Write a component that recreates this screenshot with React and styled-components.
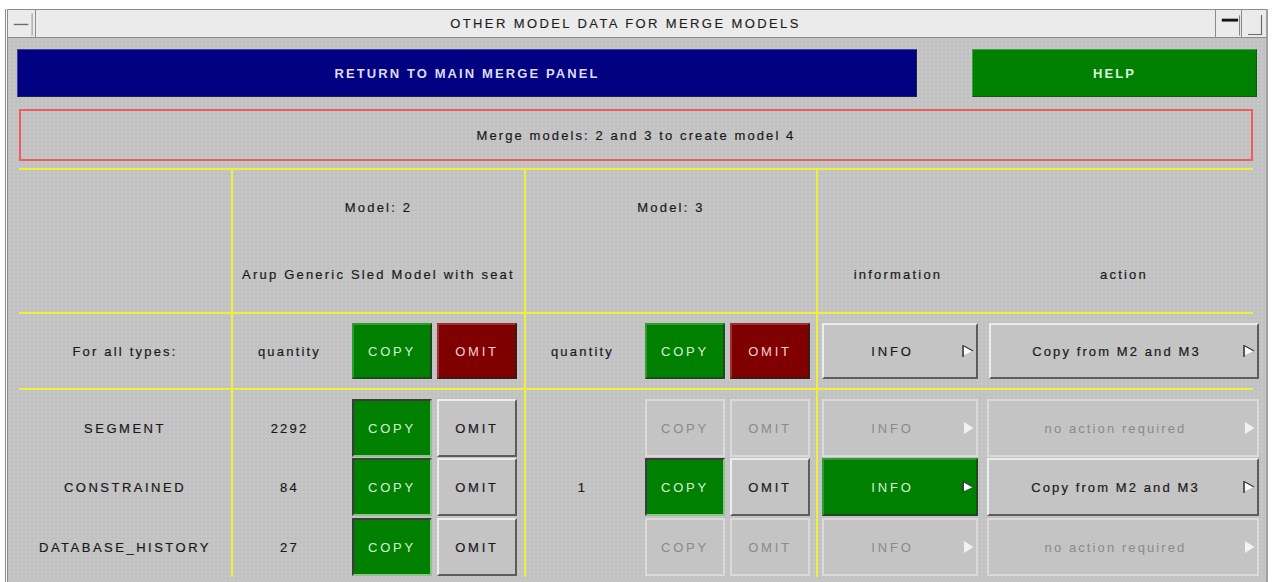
import React from 'react';
import styled, { createGlobalStyle, css } from 'styled-components';

const GlobalStyle = createGlobalStyle`
  html, body {
    margin: 0;
    padding: 0;
    background: #ffffff;
  }
  body {
    font-family: "Liberation Sans", Arial, sans-serif;
  }
  * {
    box-sizing: border-box;
  }
`;

const YELLOW = '#eeee3c';

const Window = styled.div`
  margin: 9px 0 0 5px;
  width: 1263px;
  height: 573px;
  display: flex;
  flex-direction: column;
  border-left: 3px double #8c8c8c;
  border-right: 2px solid #a0a0a0;
`;

const TitleBar = styled.div`
  display: flex;
  height: 29px;
  background: #ebebeb;
  border-top: 1px solid #8c8c8c;
  border-bottom: 1px solid #8c8c8c;
`;

const TitleBox = styled.div`
  width: ${(p) => p.$w}px;
  display: flex;
  align-items: center;
  justify-content: center;
  border-right: 1px solid #8c8c8c;
  &:last-child {
    border-right: none;
  }
`;

const Title = styled.div`
  flex: 1;
  display: flex;
  align-items: center;
  justify-content: center;
  border-right: 1px solid #8c8c8c;
  font-size: 13px;
  letter-spacing: 2.4px;
  color: #1e1e1e;
  -webkit-text-stroke: 0.15px #1e1e1e;
`;

const Body = styled.div`
  flex: 1;
  background-color: #c2c2c2;
  background-image: radial-gradient(circle, rgba(255, 255, 255, 0.16) 0.6px, transparent 0.9px);
  background-size: 4px 4px;
  padding: 11px 9px 0 9px;
  display: flex;
  flex-direction: column;
`;

const TopBar = styled.div`
  display: flex;
  justify-content: space-between;
  height: 48px;
`;

const toneColors = {
  blue: { bg: '#000080', fg: '#dcdcf8', light: '#4040a8', dark: '#202040' },
  help: { bg: '#008000', fg: '#dcf4dc', light: '#40a040', dark: '#205020' },
};

const BigButton = styled.div`
  width: ${(p) => p.$w}px;
  display: flex;
  align-items: center;
  justify-content: center;
  background: ${(p) => toneColors[p.$tone].bg};
  color: ${(p) => toneColors[p.$tone].fg};
  border: 1px solid;
  border-color: ${(p) => `${toneColors[p.$tone].light} ${toneColors[p.$tone].dark} ${toneColors[p.$tone].dark} ${toneColors[p.$tone].light}`};
  font-size: 13px;
  font-weight: bold;
  letter-spacing: 2.1px;
`;

const Message = styled.div`
  margin: 12px 4px 0 2px;
  height: 52px;
  border: 2px solid #ec5e5e;
  display: flex;
  align-items: center;
  justify-content: center;
  font-size: 13px;
  letter-spacing: 2.1px;
  color: #1a1a1a;
  -webkit-text-stroke: 0.2px #1a1a1a;
`;

const Table = styled.div`
  margin: 7px 4px 0 2px;
  border-top: 2px solid ${YELLOW};
`;

const Row = styled.div`
  display: grid;
  grid-template-columns: 212px 293px 292px 446px;
  height: ${(p) => p.$h}px;
  ${(p) =>
    p.$line &&
    css`
      border-top: 2px solid ${YELLOW};
    `}
`;

const Cell = styled.div`
  display: flex;
  align-items: ${(p) => p.$align || 'center'};
  justify-content: ${(p) => p.$justify || 'flex-start'};
  padding-top: ${(p) => p.$pt || 0}px;
  color: #1a1a1a;
  font-size: 13px;
  letter-spacing: ${(p) => (p.$caps ? 2.5 : 2.2)}px;
  -webkit-text-stroke: 0.2px #1a1a1a;
  &:not(:first-child) {
    border-left: 2px solid ${YELLOW};
  }
`;

const ModelHead = styled.div`
  width: 100%;
  display: flex;
  flex-direction: column;
  align-items: center;
  padding-top: 30px;
  gap: 51px;
  line-height: 16px;
  letter-spacing: 2.2px;
`;

const Split = styled.div`
  display: flex;
  align-items: ${(p) => p.$align || 'center'};
  gap: 11px;
  padding-left: 4px;
  height: 100%;
  padding-bottom: ${(p) => p.$pb || 0}px;
`;

const SubLabel = styled.div`
  width: ${(p) => p.$w}px;
  text-align: center;
  padding-right: ${(p) => p.$pr || 0}px;
  line-height: 16px;
`;

const Qty = styled.div`
  width: 113px;
  text-align: center;
`;

const variants = {
  raised: css`
    background: #c4c4c4;
    border-color: #ececec #5c5c5c #5c5c5c #ececec;
    color: #1a1a1a;
    -webkit-text-stroke: 0.2px #1a1a1a;
  `,
  disabled: css`
    background: #c4c4c4;
    border-color: #dadada;
    color: #8a8a8a;
    -webkit-text-stroke: 0;
  `,
  green: css`
    background: #008000;
    border-color: #2f9a2f #1c4a1c #1c4a1c #2f9a2f;
    color: #d4f2d4;
    -webkit-text-stroke: 0;
  `,
  greenIn: css`
    background: #008000;
    border-color: #3c3c3c #8cc48c #8cc48c #3c3c3c;
    color: #d4f2d4;
    -webkit-text-stroke: 0;
  `,
  red: css`
    background: #800000;
    border-color: #a03030 #401818 #401818 #a03030;
    color: #f4d2d2;
    -webkit-text-stroke: 0;
  `,
};

const Btn = styled.div`
  width: ${(p) => p.$w}px;
  height: ${(p) => p.$h}px;
  margin-left: ${(p) => p.$ml || 0}px;
  display: flex;
  align-items: center;
  border: 2px solid;
  font-size: 13px;
  letter-spacing: ${(p) => (p.$caps ? 2.8 : 2.1)}px;
  ${(p) => variants[p.$v]}
`;

const BtnLabel = styled.span`
  flex: 1;
  text-align: center;
`;

const FlagIcon = styled.svg`
  flex: none;
  margin-right: 2px;
`;

const Flag = ({ off }) => (
  <FlagIcon width="13" height="16" viewBox="0 0 13 16">
    {off ? (
      <path d="M3 2 L12.5 8 L3 14 Z" fill="#f2f2f2" />
    ) : (
      <>
        <path d="M2 2v12" stroke="#3c3c3c" strokeWidth="1.6" />
        <path d="M3 3 L12 8 L3 12 Z" fill="#ffffff" />
        <path d="M3 3 L12 8" stroke="#3c3c3c" strokeWidth="1.4" />
      </>
    )}
  </FlagIcon>
);

const MenuIcon = () => (
  <svg width="28" height="27" viewBox="0 0 28 27">
    <path d="M6 14.5h15" stroke="#6a6a6a" strokeWidth="1.4" />
    <path d="M25 3v23" stroke="#8c8c8c" strokeWidth="1" />
  </svg>
);

const MinIcon = () => (
  <svg width="26" height="27" viewBox="0 0 26 27">
    <path d="M6 10h17" stroke="#141414" strokeWidth="3" />
    <path d="M24.5 5v21" stroke="#7a7a7a" strokeWidth="1" />
  </svg>
);

const MaxIcon = () => (
  <svg width="24" height="27" viewBox="0 0 24 27">
    <path d="M19.5 5v19.5H6" stroke="#6a6a6a" strokeWidth="1.2" fill="none" />
  </svg>
);

const modelCols = [
  { head: 'Model: 2', sub: 'Arup Generic Sled Model with seat' },
  { head: 'Model: 3', sub: '' },
];

const rows = [
  {
    name: 'SEGMENT',
    m2: '2292',
    m3: '',
    m3on: false,
    infoOn: false,
    action: 'no action required',
    actionOn: false,
  },
  {
    name: 'CONSTRAINED',
    m2: '84',
    m3: '1',
    m3on: true,
    infoOn: true,
    action: 'Copy from M2 and M3',
    actionOn: true,
  },
  {
    name: 'DATABASE_HISTORY',
    m2: '27',
    m3: '',
    m3on: false,
    infoOn: false,
    action: 'no action required',
    actionOn: false,
  },
];

const CopyOmit = ({ h, copy, omit }) => (
  <>
    <Btn $w={80} $h={h} $ml={6} $v={copy} $caps>
      <BtnLabel>COPY</BtnLabel>
    </Btn>
    <Btn $w={80} $h={h} $ml={5} $v={omit} $caps>
      <BtnLabel>OMIT</BtnLabel>
    </Btn>
  </>
);

const App = () => (
  <>
    <GlobalStyle />
    <Window>
      <TitleBar>
        <TitleBox $w={28}>
          <MenuIcon />
        </TitleBox>
        <Title>OTHER MODEL DATA FOR MERGE MODELS</Title>
        <TitleBox $w={26}>
          <MinIcon />
        </TitleBox>
        <TitleBox $w={24}>
          <MaxIcon />
        </TitleBox>
      </TitleBar>
      <Body>
        <TopBar>
          <BigButton $w={900} $tone="blue">RETURN TO MAIN MERGE PANEL</BigButton>
          <BigButton $w={285} $tone="help">HELP</BigButton>
        </TopBar>
        <Message>Merge models: 2 and 3 to create model 4</Message>
        <Table>
          <Row $h={142}>
            <Cell />
            {modelCols.map((m) => (
              <Cell key={m.head} $align="flex-start">
                <ModelHead>
                  <span>{m.head}</span>
                  <span>{m.sub || '\u00a0'}</span>
                </ModelHead>
              </Cell>
            ))}
            <Cell $align="flex-end">
              <Split $align="flex-end" $pb={29}>
                <SubLabel $w={156} $pr={4}>information</SubLabel>
                <SubLabel $w={270}>action</SubLabel>
              </Split>
            </Cell>
          </Row>
          <Row $h={76} $line>
            <Cell $justify="center">For all types:</Cell>
            <Cell>
              <Qty>quantity</Qty>
              <CopyOmit h={56} copy="green" omit="red" />
            </Cell>
            <Cell>
              <Qty>quantity</Qty>
              <CopyOmit h={56} copy="green" omit="red" />
            </Cell>
            <Cell>
              <Split>
                <Btn $w={156} $h={56} $v="raised" $caps>
                  <BtnLabel>INFO</BtnLabel>
                  <Flag />
                </Btn>
                <Btn $w={270} $h={56} $v="raised">
                  <BtnLabel>Copy from M2 and M3</BtnLabel>
                  <Flag />
                </Btn>
              </Split>
            </Cell>
          </Row>
          {rows.map((r, i) => (
            <Row key={r.name} $h={i === 0 ? 69 : 60} $line={i === 0}>
              <Cell $justify="center" $pt={i === 0 ? 9 : 0} $caps>
                {r.name}
              </Cell>
              <Cell $pt={i === 0 ? 9 : 0}>
                <Qty>{r.m2}</Qty>
                <CopyOmit h={58} copy="greenIn" omit="raised" />
              </Cell>
              <Cell $pt={i === 0 ? 9 : 0}>
                <Qty>{r.m3}</Qty>
                <CopyOmit
                  h={58}
                  copy={r.m3on ? 'greenIn' : 'disabled'}
                  omit={r.m3on ? 'raised' : 'disabled'}
                />
              </Cell>
              <Cell $pt={i === 0 ? 9 : 0}>
                <Split>
                  <Btn $w={156} $h={58} $v={r.infoOn ? 'green' : 'disabled'} $caps>
                    <BtnLabel>INFO</BtnLabel>
                    <Flag off={!r.infoOn} />
                  </Btn>
                  <Btn $w={272} $h={58} $ml={-2} $v={r.actionOn ? 'raised' : 'disabled'}>
                    <BtnLabel>{r.action}</BtnLabel>
                    <Flag off={!r.actionOn} />
                  </Btn>
                </Split>
              </Cell>
            </Row>
          ))}
        </Table>
      </Body>
    </Window>
  </>
);

export default App;
